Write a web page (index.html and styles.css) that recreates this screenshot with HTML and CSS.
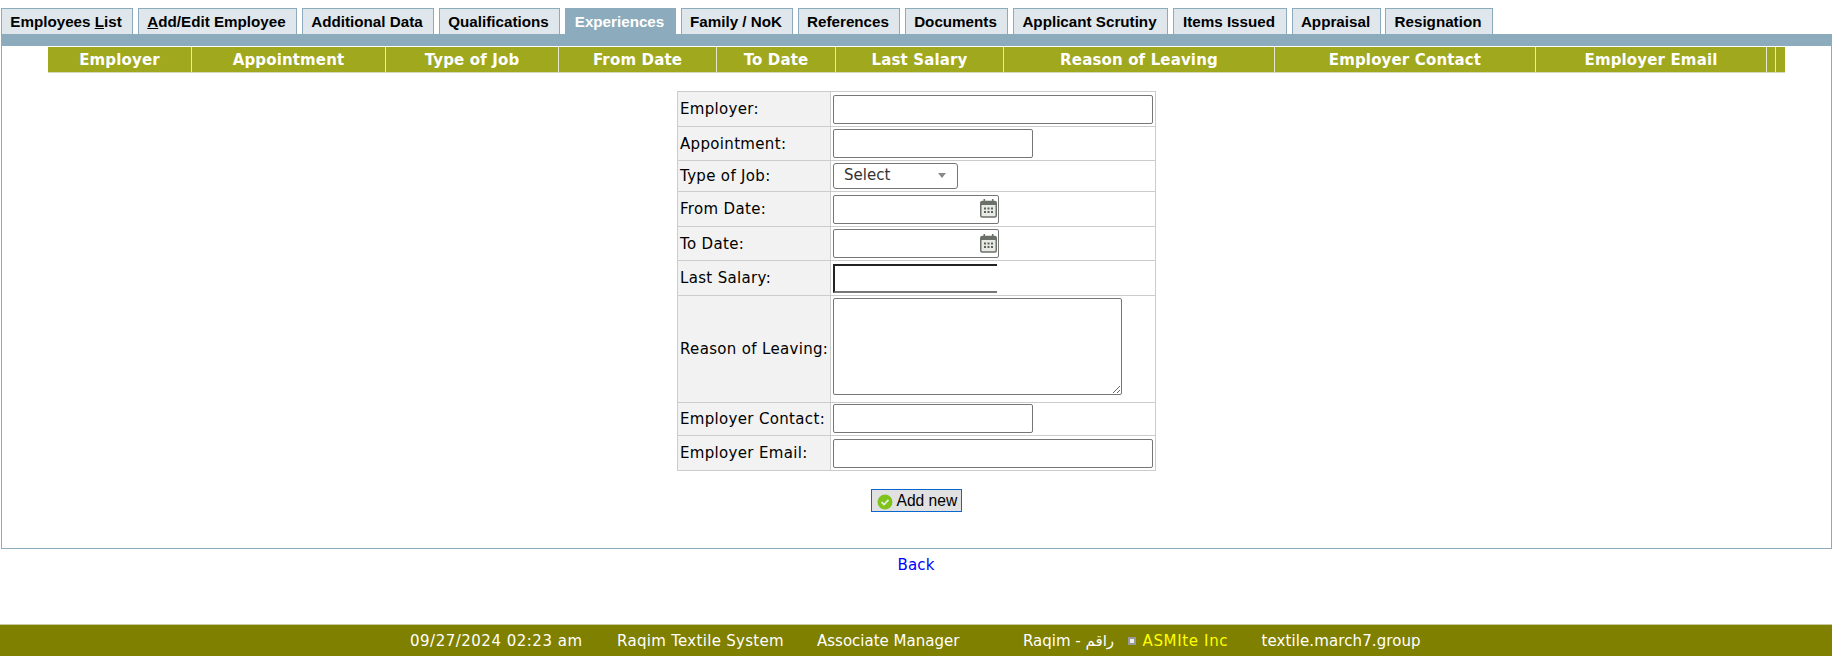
FILE: index.html
```html
<!DOCTYPE html>
<html lang="en">
<head>
<meta charset="utf-8">
<title>Experiences</title>
<link rel="stylesheet" href="styles.css">
</head>
<body>
<svg width="0" height="0" class="defs">
  <symbol id="cal" viewBox="0 0 17 20">
    <rect x="0.75" y="3.5" width="15.5" height="15.5" rx="1.5" fill="#e8eae6" stroke="#6b7068" stroke-width="1.5"/>
    <rect x="1" y="3.5" width="15" height="3.5" fill="#6b7068"/>
    <rect x="3.5" y="1" width="1.6" height="4" fill="#6b7068"/>
    <rect x="11.9" y="1" width="1.6" height="4" fill="#6b7068"/>
    <g fill="#5c6258">
      <rect x="4" y="9.5" width="2" height="2"/><rect x="7.5" y="9.5" width="2" height="2"/><rect x="11" y="9.5" width="2" height="2"/>
      <rect x="4" y="13" width="2" height="2"/><rect x="7.5" y="13" width="2" height="2"/><rect x="11" y="13" width="2" height="2"/>
    </g>
  </symbol>
</svg>
<nav class="tabs">
  <a class="tab t1">Employees <u>L</u>ist</a>
  <a class="tab t2"><u>A</u>dd/Edit Employee</a>
  <a class="tab t3">Additional Data</a>
  <a class="tab t4">Qualifications</a>
  <a class="tab active t5">Experiences</a>
  <a class="tab t6">Family / NoK</a>
  <a class="tab t7">References</a>
  <a class="tab t8">Documents</a>
  <a class="tab t9">Applicant Scrutiny</a>
  <a class="tab t10">Items Issued</a>
  <a class="tab t11">Appraisal</a>
  <a class="tab t12">Resignation</a>
</nav>
<main class="panel">
  <div class="bar"></div>
  <div class="grid-head">
    <div class="hc h1">Employer</div>
    <div class="hc h2">Appointment</div>
    <div class="hc h3">Type of Job</div>
    <div class="hc h4">From Date</div>
    <div class="hc h5">To Date</div>
    <div class="hc h6">Last Salary</div>
    <div class="hc h7">Reason of Leaving</div>
    <div class="hc h8">Employer Contact</div>
    <div class="hc h9">Employer Email</div>
    <div class="hc h10"></div>
    <div class="hc h11"></div>
  </div>
  <table class="form">
    <tr class="r35"><th>Employer:</th><td><input class="field wide" type="text"></td></tr>
    <tr class="r34"><th>Appointment:</th><td><input class="field mid" type="text"></td></tr>
    <tr class="r31"><th>Type of Job:</th><td><div class="select"><span>Select</span><i class="caret"></i></div></td></tr>
    <tr class="r35"><th>From Date:</th><td><div class="field datebox"><svg class="cal"><use href="#cal"/></svg></div></td></tr>
    <tr class="r34"><th>To Date:</th><td><div class="field datebox"><svg class="cal"><use href="#cal"/></svg></div></td></tr>
    <tr class="r35"><th>Last Salary:</th><td><div class="focused"></div></td></tr>
    <tr class="r107"><th>Reason of Leaving:</th><td class="top"><textarea class="area"></textarea></td></tr>
    <tr class="r33"><th>Employer Contact:</th><td class="up"><input class="field mid" type="text"></td></tr>
    <tr class="r35"><th>Employer Email:</th><td><input class="field wide" type="text"></td></tr>
  </table>
  <div class="actions">
    <button class="add" type="button">
      <svg class="ok" viewBox="0 0 16 16" width="16" height="16"><circle cx="8" cy="8" r="7.5" fill="#7fc31c"/><path d="M4.5 8.2 7 10.6 11.5 5.9" fill="none" stroke="#e8f0e0" stroke-width="1.8"/></svg>
      <span>Add new</span>
    </button>
  </div>
</main>
<div class="back"><a>Back</a></div>
<footer class="foot">
  <span class="stamp">09/27/2024 02:23 am</span>
  <span class="sys">Raqim Textile System</span>
  <span class="role">Associate Manager</span>
  <span class="brand">Raqim - راقم</span>
  <i class="mini"></i>
  <span class="co">ASMIte Inc</span>
  <span class="host">textile.march7.group</span>
</footer>
</body>
</html>
```
FILE: styles.css
```css
* { box-sizing: border-box; }
html, body { margin: 0; padding: 0; background: #fff; }
body { font-family: "DejaVu Sans", Verdana, sans-serif; font-size: 15px; color: #000; height: 658px; overflow: hidden; }
.defs { position: absolute; }

.tabs { display: flex; height: 34px; padding: 8px 0 0 1px; font-family: "Liberation Sans", Arial, sans-serif; }
.tab { height: 26px; margin-right: 5px; padding-right: 2px; background: #dfe7ed; border: 1px solid #8cabbd; border-bottom: 0; font-size: 15.2px; font-weight: bold; line-height: 25px; text-align: center; white-space: nowrap; }
.tab.active { background: #8cabbd; color: #fff; }
.t1 { width: 132px; }
.t2 { width: 159px; }
.t3 { width: 132px; }
.t4 { width: 121px; }
.t5 { width: 111px; }
.t6 { width: 112px; }
.t7 { width: 102px; }
.t8 { width: 103px; }
.t9 { width: 155px; }
.t10 { width: 114px; }
.t11 { width: 89px; margin-right: 4px; }
.t12 { width: 108px; margin-right: 0; }

.panel { margin-left: 1px; height: 515px; border: 1px solid #8cabbd; border-top: 0; }
.bar { height: 12px; margin: 0 -1px; background: #8cabbd; }
.grid-head { display: flex; height: 26px; margin: 1px 0 0 46px; width: 1737px; background: #a0a81e; border-bottom: 1px solid #d5d8c0; color: #fff; font-size: 15px; font-weight: bold; letter-spacing: .15px; line-height: 26px; text-align: center; }
.hc { border-right: 1px solid #e4e6d0; white-space: nowrap; }
.h1 { width: 144px; }
.h2 { width: 194px; }
.h3 { width: 173px; }
.h4 { width: 158px; }
.h5 { width: 119px; }
.h6 { width: 168px; }
.h7 { width: 271px; }
.h8 { width: 261px; }
.h9 { width: 231px; }
.h10 { width: 9px; }
.h11 { flex: 1; border-right: 0; }

.form { border-collapse: collapse; margin: 18px 0 0 675px; width: 479px; table-layout: fixed; }
.form th, .form td { border: 1px solid #ccc; padding: 0 2px; vertical-align: middle; }
.form th { width: 153px; background: #f2f2f2; font-weight: normal; letter-spacing: .33px; text-align: left; white-space: nowrap; }
.form td.top { vertical-align: top; padding-top: 2px; }
.form td.up { padding-bottom: 2px; }
.r35 { height: 35px; }
.r34 { height: 34px; }
.r33 { height: 33px; }
.r31 { height: 31px; }
.r107 { height: 107px; }

.field { display: block; height: 29px; padding: 0 4px; border: 1px solid #767676; border-radius: 2px; background: #fff; font: inherit; }
.wide { width: 320px; }
.mid { width: 200px; }
.datebox { display: flex; align-items: center; justify-content: flex-end; width: 166px; padding: 0 1px 2px 0; }
.cal { width: 17px; height: 20px; }
.select { display: flex; align-items: center; width: 125px; height: 26px; padding: 0 0 2px 10px; border: 1px solid #767676; border-radius: 3px; color: #333; }
.caret { width: 0; height: 0; margin-left: 48px; border: 4px solid transparent; border-top: 5px solid #888; border-bottom: 0; }
.focused { width: 164px; height: 29px; border-top: 2px solid #222; border-left: 2px solid #222; border-bottom: 2px solid #777; }
.area { display: block; width: 289px; height: 97px; border: 1px solid #767676; border-radius: 2px; background: #fff; }

.actions { display: flex; justify-content: center; padding: 18px 0 0 0; margin-left: -1px; }
.add { display: flex; align-items: center; gap: 4px; width: 91px; height: 23px; padding: 0 0 0 5px; border: 1px solid #0a67d0; background: #e1e1e1; font-family: "Liberation Sans", Arial, sans-serif; font-size: 15.6px; color: #000; }
.ok { flex: none; margin-top: 2px; }

.back { height: 75px; padding-top: 7px; text-align: center; color: #00f; line-height: 18px; letter-spacing: .2px; }
.foot { display: flex; align-items: center; height: 32px; padding-left: 410px; background: #808000; border-top: 1px solid #c9c9a0; color: #fff; letter-spacing: .3px; white-space: nowrap; }
.stamp { width: 207px; letter-spacing: .5px; }
.sys { width: 200px; }
.role { width: 206px; letter-spacing: 0; }
.brand { width: 104.5px; letter-spacing: 0; }
.mini { width: 8px; height: 8px; margin-right: 7px; background: #eee; border: 2px solid #999; }
.co { width: 119px; color: #ff0; letter-spacing: .65px; }
.host { letter-spacing: .1px; }
```
